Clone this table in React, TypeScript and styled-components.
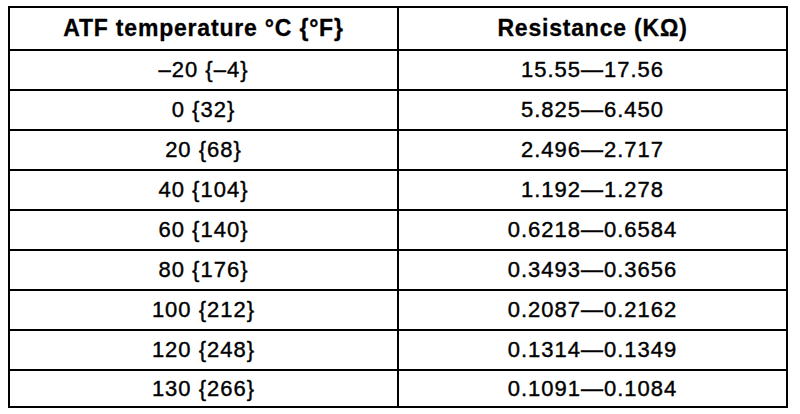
import React from "react";
import styled, { createGlobalStyle } from "styled-components";

const rows = [
  { temp: "–20 {–4}", res: "15.55—17.56" },
  { temp: "0 {32}", res: "5.825—6.450" },
  { temp: "20 {68}", res: "2.496—2.717" },
  { temp: "40 {104}", res: "1.192—1.278" },
  { temp: "60 {140}", res: "0.6218—0.6584" },
  { temp: "80 {176}", res: "0.3493—0.3656" },
  { temp: "100 {212}", res: "0.2087—0.2162" },
  { temp: "120 {248}", res: "0.1314—0.1349" },
  { temp: "130 {266}", res: "0.1091—0.1084" },
];

const App = () => {
  return (
    <>
      <GlobalStyle />
      <Page>
        <Table>
          <thead>
            <tr>
              <HeadCell>ATF temperature °C {"{°F}"}</HeadCell>
              <HeadCell>Resistance (KΩ)</HeadCell>
            </tr>
          </thead>
          <tbody>
            {rows.map((r, i) => (
              <Row key={r.temp} $last={i === rows.length - 1}>
                <Cell>{r.temp}</Cell>
                <Cell>{r.res}</Cell>
              </Row>
            ))}
          </tbody>
        </Table>
      </Page>
    </>
  );
};

const GlobalStyle = createGlobalStyle`
  html, body {
    margin: 0;
    padding: 0;
    background: #ffffff;
  }
`;

const Page = styled.div`
  width: 800px;
  height: 414px;
  padding: 6px 0 0 8px;
  box-sizing: border-box;
  background: #ffffff;
  font-family: "Liberation Sans", Arial, sans-serif;
  color: #000000;
`;

const Table = styled.table`
  width: 780px;
  border-collapse: collapse;
  table-layout: fixed;
  border: 2px solid #000;
`;

const HeadCell = styled.th`
  height: 41px;
  padding: 0;
  border: 2px solid #000;
  font-size: 23px;
  font-weight: 700;
  letter-spacing: 0.8px;
  -webkit-text-stroke: 0.3px #000;
  text-align: center;
  vertical-align: middle;
`;

const Row = styled.tr<{ $last?: boolean }>`
  height: ${(p) => (p.$last ? "37px" : "40px")};
`;

const Cell = styled.td`
  padding: 0;
  border: 2px solid #000;
  font-size: 22px;
  letter-spacing: 1px;
  -webkit-text-stroke: 0.4px #000;
  text-align: center;
  vertical-align: middle;
`;

export default App;
